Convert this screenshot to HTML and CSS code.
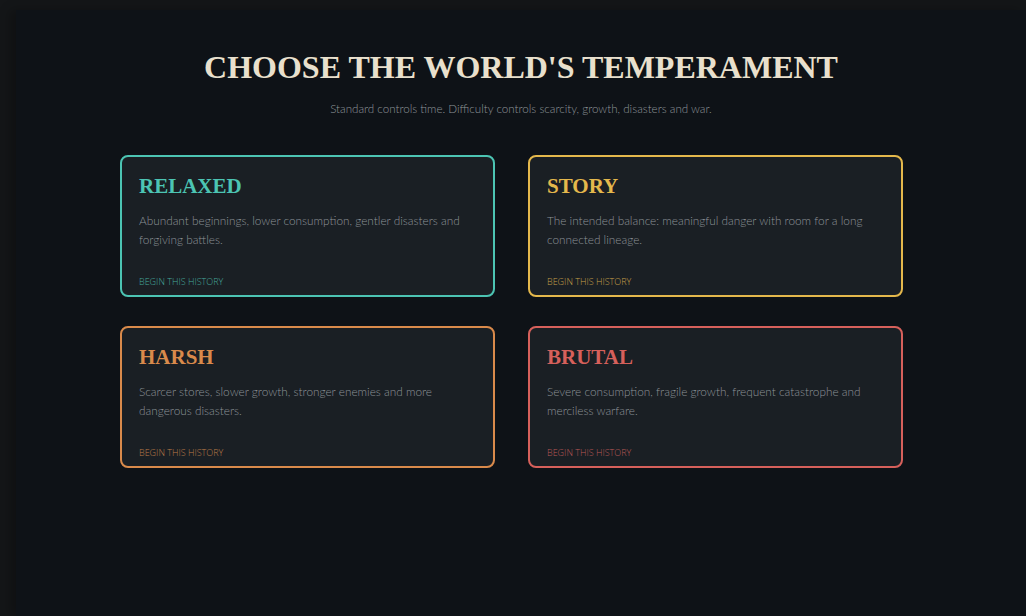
FILE: index.html
```html
<!DOCTYPE html>
<html lang="en">
<head>
<meta charset="utf-8">
<title>Choose the World's Temperament</title>
<link rel="stylesheet" href="styles.css">
</head>
<body>
<main class="screen">
  <header class="intro">
    <h1 class="intro-title">CHOOSE THE WORLD'S TEMPERAMENT</h1>
    <p class="intro-sub">Standard controls time. Difficulty controls scarcity, growth, disasters and war.</p>
  </header>
  <section class="modes">
    <div class="mode mode-relaxed">
      <h2 class="mode-name">RELAXED</h2>
      <p class="mode-desc">Abundant beginnings, lower consumption, gentler disasters and forgiving battles.</p>
      <span class="mode-cta">BEGIN THIS HISTORY</span>
    </div>
    <div class="mode mode-story">
      <h2 class="mode-name">STORY</h2>
      <p class="mode-desc">The intended balance: meaningful danger with room for a long connected lineage.</p>
      <span class="mode-cta">BEGIN THIS HISTORY</span>
    </div>
    <div class="mode mode-harsh">
      <h2 class="mode-name">HARSH</h2>
      <p class="mode-desc">Scarcer stores, slower growth, stronger enemies and more dangerous disasters.</p>
      <span class="mode-cta">BEGIN THIS HISTORY</span>
    </div>
    <div class="mode mode-brutal">
      <h2 class="mode-name">BRUTAL</h2>
      <p class="mode-desc">Severe consumption, fragile growth, frequent catastrophe and merciless warfare.</p>
      <span class="mode-cta">BEGIN THIS HISTORY</span>
    </div>
  </section>
</main>
</body>
</html>
```

FILE: styles.css
```css
* { box-sizing: border-box; }

html, body {
  margin: 0;
  height: 100%;
}

body {
  background: #141618;
  padding: 10px 0 0 16px;
  overflow: hidden;
}

.screen {
  height: 100%;
  background: #0e1217;
  box-shadow: -6px 0 10px rgba(0, 0, 0, 0.25);
  padding-top: 38px;
}

.intro {
  text-align: center;
}

.intro-title {
  margin: 0;
  font-family: "Liberation Serif", "DejaVu Serif", serif;
  font-weight: bold;
  font-size: 32px;
  line-height: 38px;
  color: #e9e0cd;
}

.intro-sub {
  margin: 15px 0 0;
  font-family: Lato, "Open Sans", sans-serif;
  font-weight: 300;
  font-size: 11.6px;
  line-height: 16px;
  color: #8f959a;
}

.modes {
  width: 802px;
  margin: 38px auto 0;
  display: grid;
  grid-template-columns: 375px 375px;
  gap: 29px 33px;
}

.mode {
  height: 142px;
  border: 2px solid;
  border-radius: 8px;
  background: #1a1f24;
  padding: 16px 17px 0;
  display: flex;
  flex-direction: column;
}

.mode-name {
  margin: 0;
  font-family: "Liberation Serif", "DejaVu Serif", serif;
  font-weight: bold;
  font-size: 21px;
  line-height: 26px;
}

.mode-desc {
  margin: 12px 0 0;
  font-family: Lato, "Open Sans", sans-serif;
  font-weight: 300;
  font-size: 11.8px;
  line-height: 19px;
  color: #8d9398;
}

.mode-cta {
  margin-top: auto;
  margin-bottom: 7px;
  font-family: "Open Sans", "Noto Sans", sans-serif;
  font-weight: 300;
  font-size: 9px;
  line-height: 12px;
}

.mode-relaxed { border-color: #4cc4b3; }
.mode-relaxed .mode-name { color: #4cc4b3; }
.mode-relaxed .mode-cta { color: #46a99c; }

.mode-story { border-color: #e4b84c; }
.mode-story .mode-name { color: #e4b84c; }
.mode-story .mode-cta { color: #c7a049; }

.mode-harsh { border-color: #d98a4b; }
.mode-harsh .mode-name { color: #d98a4b; }
.mode-harsh .mode-cta { color: #bd7c48; }

.mode-brutal { border-color: #d6605b; }
.mode-brutal .mode-name { color: #d6605b; }
.mode-brutal .mode-cta { color: #b95856; }
```
